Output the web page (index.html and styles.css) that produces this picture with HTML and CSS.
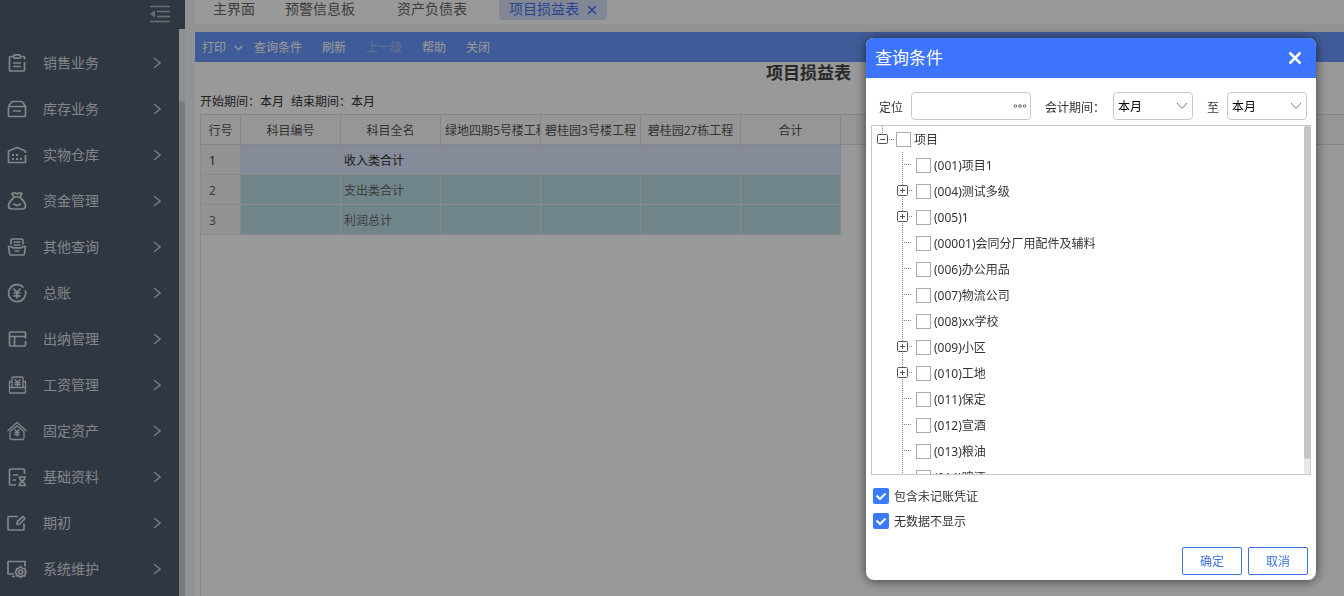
FILE: index.html
```html
<!DOCTYPE html>
<html lang="zh-CN">
<head>
<meta charset="utf-8">
<title>项目损益表</title>
<link rel="stylesheet" href="styles.css">
</head>
<body>
<svg class="sprite" aria-hidden="true">
  <symbol id="arrow" viewBox="0 0 8 14"><path d="M1 2l6 5-6 5"/></symbol>
  <symbol id="down" viewBox="0 0 12 8"><path d="M1 1l5 5.500 5-5.500"/></symbol>
  <symbol id="leaf" viewBox="0 0 19 26"><path class="dots" d="M5.500 0V26M7 12.500H15"/></symbol>
  <symbol id="plus" viewBox="0 0 19 26"><path class="dots" d="M5.500 0V7M5.500 19V26M12 12.500H15"/><rect x=".5" y="7.500" width="10" height="10" rx="1"/><path d="M3 12.500H8M5.500 10V15"/></symbol>
  <symbol id="minus" viewBox="0 0 19 26"><path class="dots" d="M5.500 0V7M12 13.500H17"/><rect x=".5" y="8.500" width="10" height="9" rx="1"/><path d="M3 13.500H8"/></symbol>
</svg>
<div class="app">
  <aside class="sidebar">
    <div class="side-top">
      <button class="collapse" aria-label="收起菜单"><svg viewBox="0 0 20 18"><path d="M0 1.500H20M7 6.500H20M7 11.500H20M0 16.500H20"/><path class="solid" d="M0 9l5-3.500v7z"/></svg></button>
    </div>
    <div class="side-body">
      <nav class="menu">
        <a href="#"><svg class="icon" viewBox="0 0 20 20"><path d="M6 3.500H3.500Q2.500 3.500 2.500 4.500V17Q2.500 18 3.500 18H16.500Q17.500 18 17.500 17V9M14 3.500H16.500Q17.500 3.500 17.500 4.500V6.500M6.500 3.500Q6.500 1.800 8 1.800H12Q13.500 1.800 13.500 3.500Q13.500 5.200 12 5.200H8Q6.500 5.200 6.500 3.500M6 10H14M6 13.500H14"/></svg><span>销售业务</span><svg class="arrow"><use href="#arrow"/></svg></a>
        <a href="#"><svg class="icon" viewBox="0 0 20 20"><path d="M1.500 7L4.500 3.200Q5 2.500 6 2.500H14Q15 2.500 15.500 3.200L18.500 7M1.500 7.500H18.500V16.500Q18.500 17.500 17.500 17.500H2.500Q1.500 17.500 1.500 16.500V7.500M6 12H14"/></svg><span>库存业务</span><svg class="arrow"><use href="#arrow"/></svg></a>
        <a href="#"><svg class="icon" viewBox="0 0 20 20"><path d="M18.500 8V6L10 2.500 1.500 6V17.500H18.500V10"/><path class="dotfill" d="M5 9h2v2H5zM9 9h2v2H9zM5 13h2v2H5zM9 13h2v2H9zM13 13h2v2h-2z"/></svg><span>实物仓库</span><svg class="arrow"><use href="#arrow"/></svg></a>
        <a href="#"><svg class="icon" viewBox="0 0 20 20"><path d="M7 6L5 2.500Q7.500 1 10 3Q12.500 1 15 2.500L13 6ZM7 6.500Q1.500 11 1.500 15Q1.500 18 5 18H15Q18.500 18 18.500 15Q18.500 11 13 6.500M6 12.500Q10 16.500 14 12.500"/></svg><span>资金管理</span><svg class="arrow"><use href="#arrow"/></svg></a>
        <a href="#"><svg class="icon" viewBox="0 0 20 20"><path d="M4 7.500V3.500Q4 2 5.500 2H14.500Q16 2 16 3.500V7.500M6.500 5H13.500M6.500 8H13.500M4 9.500H1.500L2.500 16.500Q2.700 18 4 18H16Q17.300 18 17.500 16.500L18.500 9.500H16Q15 10.800 13.500 10.800H6.500Q5 10.800 4 9.500M7.500 14H12.500"/></svg><span>其他查询</span><svg class="arrow"><use href="#arrow"/></svg></a>
        <a href="#"><svg class="icon" viewBox="0 0 20 20"><path d="M16.500 4.500A8.500 8.500 0 1 0 18.200 7.500M6.500 5.500L10 9.500 13.500 5.500M10 9.500V15.500M6.500 10H13.500M6.500 12.800H13.500"/></svg><span>总账</span><svg class="arrow"><use href="#arrow"/></svg></a>
        <a href="#"><svg class="icon" viewBox="0 0 20 20"><path d="M18.500 9.500V4Q18.500 3 17.500 3H3.500Q2.500 3 2.500 4V16Q2.500 17 3.500 17H17.500Q18.500 17 18.500 16V12M2.500 7.500H18.500M7.500 7.500V17"/></svg><span>出纳管理</span><svg class="arrow"><use href="#arrow"/></svg></a>
        <a href="#"><svg class="icon thin" viewBox="0 0 20 20"><path d="M5 12.500V3Q5 2 6 2H15Q16 2 16 3V12.500M5 6.500H2.500V17Q2.500 18 3.500 18H17.500Q18.500 18 18.500 17V6.500H16M2.500 12.500H18.500M7.500 4L10.500 7 13.500 4M10.500 7V11.500M7.500 7.500H13.500M7.500 9.500H13.500"/></svg><span>工资管理</span><svg class="arrow"><use href="#arrow"/></svg></a>
        <a href="#"><svg class="icon thin" viewBox="0 0 20 20"><path d="M.5 10L10 1.500 19.500 10M3 10.500L10 4.800 17 10.500V17Q17 18.500 15.500 18.500H4.500Q3 18.500 3 17V10.500M7.800 8.500L10 11 12.200 8.500M10 11V15.500M7.500 11.500H12.500M7.500 13.500H12.500"/></svg><span>固定资产</span><svg class="arrow"><use href="#arrow"/></svg></a>
        <a href="#"><svg class="icon" viewBox="0 0 20 20"><path d="M17.500 7V3Q17.500 2 16.500 2H3.500Q2.500 2 2.500 3V17Q2.500 18 3.500 18H9M6 8H11M6 13H9M11.500 10H19M11.500 18.500H19M12.500 10Q12.500 12.500 15.200 14.200Q18 12.500 18 10M12.500 18.500Q12.500 16 15.200 14.200Q18 16 18 18.500"/></svg><span>基础资料</span><svg class="arrow"><use href="#arrow"/></svg></a>
        <a href="#"><svg class="icon" viewBox="0 0 20 20"><path d="M11 3.500H2Q1 3.500 1 4.500V16Q1 17 2 17H16Q17 17 17 16V10.500M10 11.500L10.500 8.500 16 3.500 18 5.500 12.700 11Z"/></svg><span>期初</span><svg class="arrow"><use href="#arrow"/></svg></a>
        <a href="#"><svg class="icon" viewBox="0 0 20 20"><path d="M18 7.500V2.500H1V15H7M5 17.500H8M13.500 7.500L15.500 9.500 18 9.500 18.200 11.500 19.200 13 18 14.500V16.800H15.500L13.700 18.300 11.500 16.800H9.500V14.500L8.200 13 9.500 11.500V9.500H11.500Z"/><circle cx="13.700" cy="13" r="2"/></svg><span>系统维护</span><svg class="arrow"><use href="#arrow"/></svg></a>
      </nav>
      <div class="side-scroll"><div class="side-thumb"></div></div>
    </div>
  </aside>
  <main class="main">
    <nav class="tabs">
      <a class="tab home" href="#">主界面</a>
      <a class="tab" href="#">预警信息板</a>
      <a class="tab" href="#">资产负债表</a>
      <div class="tab active"><a href="#">项目损益表</a><button aria-label="关闭标签"><svg viewBox="0 0 10 10"><path d="M1 1l8 8M9 1l-8 8"/></svg></button></div>
    </nav>
    <section class="sheet">
      <div class="toolbar">
        <button class="print">打印<svg viewBox="0 0 12 8"><use href="#down"/></svg></button>
        <button>查询条件</button>
        <button>刷新</button>
        <button disabled>上一级</button>
        <button>帮助</button>
        <button>关闭</button>
      </div>
      <h1>项目损益表</h1>
      <p class="period"><span>开始期间：本月</span><span>结束期间：本月</span></p>
      <div class="grid">
        <table>
          <colgroup><col class="num"><col class="data"><col class="data"><col class="data"><col class="data"><col class="data"><col class="data"><col></colgroup>
          <thead><tr><th>行号</th><th>科目编号</th><th>科目全名</th><th>绿地四期5号楼工程</th><th>碧桂园3号楼工程</th><th>碧桂园27栋工程</th><th>合计</th><th></th></tr></thead>
          <tbody>
            <tr class="current"><td>1</td><td></td><td>收入类合计</td><td></td><td></td><td></td><td></td><td></td></tr>
            <tr><td>2</td><td></td><td>支出类合计</td><td></td><td></td><td></td><td></td><td></td></tr>
            <tr><td>3</td><td></td><td>利润总计</td><td></td><td></td><td></td><td></td><td></td></tr>
          </tbody>
        </table>
      </div>
    </section>
  </main>
</div>
<div class="backdrop"></div>
<div class="dialog" role="dialog" aria-labelledby="dlg-title">
  <header><h2 id="dlg-title">查询条件</h2><button aria-label="关闭"><svg viewBox="0 0 14 14"><path d="M1.500 1.500l11 11M12.500 1.500l-11 11"/></svg></button></header>
  <div class="filters">
    <label for="locate">定位</label>
    <div class="locate"><input id="locate" type="text"><button aria-label="选择"><svg viewBox="0 0 14 6"><circle cx="2.500" cy="3" r="1.300"/><circle cx="7" cy="3" r="1.300"/><circle cx="11.500" cy="3" r="1.300"/></svg></button></div>
    <label class="range" for="from">会计期间：</label>
    <div class="pick"><select id="from"><option>本月</option></select><svg viewBox="0 0 12 8"><use href="#down"/></svg></div>
    <label class="to" for="to">至</label>
    <div class="pick"><select id="to"><option>本月</option></select><svg viewBox="0 0 12 8"><use href="#down"/></svg></div>
  </div>
  <div class="tree">
    <ul>
      <li class="root"><svg><use href="#minus"/></svg><label><input type="checkbox">项目</label></li>
      <li><svg><use href="#leaf"/></svg><label><input type="checkbox">(001)项目1</label></li>
      <li><svg><use href="#plus"/></svg><label><input type="checkbox">(004)测试多级</label></li>
      <li><svg><use href="#plus"/></svg><label><input type="checkbox">(005)1</label></li>
      <li><svg><use href="#leaf"/></svg><label><input type="checkbox">(00001)会同分厂用配件及辅料</label></li>
      <li><svg><use href="#leaf"/></svg><label><input type="checkbox">(006)办公用品</label></li>
      <li><svg><use href="#leaf"/></svg><label><input type="checkbox">(007)物流公司</label></li>
      <li><svg><use href="#leaf"/></svg><label><input type="checkbox">(008)xx学校</label></li>
      <li><svg><use href="#plus"/></svg><label><input type="checkbox">(009)小区</label></li>
      <li><svg><use href="#plus"/></svg><label><input type="checkbox">(010)工地</label></li>
      <li><svg><use href="#leaf"/></svg><label><input type="checkbox">(011)保定</label></li>
      <li><svg><use href="#leaf"/></svg><label><input type="checkbox">(012)宣酒</label></li>
      <li><svg><use href="#leaf"/></svg><label><input type="checkbox">(013)粮油</label></li>
      <li><svg><use href="#leaf"/></svg><label><input type="checkbox">(014)啤酒</label></li>
    </ul>
    <div class="tree-scroll"><div class="tree-thumb"></div></div>
  </div>
  <div class="options">
    <label><span class="check"><input type="checkbox" checked><svg viewBox="0 0 16 16"><path d="M3.500 7.500l3.500 3.500 5.500-5.500"/></svg></span>包含未记账凭证</label>
    <label><span class="check"><input type="checkbox" checked><svg viewBox="0 0 16 16"><path d="M3.500 7.500l3.500 3.500 5.500-5.500"/></svg></span>无数据不显示</label>
  </div>
  <footer><button>确定</button><button>取消</button></footer>
</div>
</body>
</html>
```
FILE: styles.css
```css
* { box-sizing: border-box; }
html, body { height: 100%; }
body { margin: 0; overflow: hidden; background: #f3f5f8; color: #333; font: 12px/18px "Noto Sans", "Noto Sans CJK SC", sans-serif; }
button, input, select { font: inherit; color: inherit; margin: 0; padding: 0; border: 0; background: none; }
a { color: inherit; text-decoration: none; }
svg { display: block; flex: none; fill: none; stroke: currentColor; }
.sprite { position: absolute; width: 0; height: 0; }
h1, h2, p, ul { margin: 0; padding: 0; }

.app { display: flex; height: 100vh; }

.sidebar { flex: none; width: 185px; display: flex; flex-direction: column; overflow: hidden; background: #4f5c71; color: #dcdee2; }
.side-top { flex: none; height: 29px; display: flex; justify-content: flex-end; padding: 5px 15px 0 0; }
.collapse { height: 18px; color: #b4b6ba; }
.collapse svg { width: 20px; height: 18px; stroke-width: 1.5; }
.collapse .solid { fill: currentColor; stroke: none; }
.side-body { flex: 1; min-height: 0; display: flex; }
.menu { flex: 1; padding-top: 11px; overflow: hidden; font-size: 14px; line-height: 20px; }
.menu a { display: flex; align-items: center; height: 46px; padding: 0 18px 0 7px; }
.menu span { flex: 1; margin-left: 16px; }
.icon { width: 20px; height: 20px; stroke-width: 1.7; stroke-linejoin: round; }
.icon.thin { stroke-width: 1.3; }
.icon .dotfill { fill: currentColor; stroke: none; }
.arrow { width: 8px; height: 14px; color: #c4c8d0; stroke-width: 1.5; }
.side-scroll { width: 6px; padding-top: 72px; background: #efefef; }
.side-thumb { height: 100%; border-radius: 3px 3px 0 0; background: #cdcdcd; }

.main { flex: 1; min-width: 0; display: flex; flex-direction: column; padding-left: 10px; }
.tabs { flex: none; display: flex; gap: 4px; height: 24px; padding-left: 8px; background: #fff; color: #666; font-size: 14px; line-height: 18px; }
.tab { height: 20px; padding: 0 28px 0 10px; border-radius: 0 0 4px 4px; white-space: nowrap; }
.tab.home { padding-right: 16px; }
.tab.active { display: flex; align-items: center; gap: 8px; padding-right: 10px; background: #d9e2fb; color: #4272ee; }
.tab.active a { height: 20px; }
.tab.active svg { width: 10px; height: 10px; stroke-width: 1.5; }

.sheet { flex: 1; min-height: 0; margin-top: 8px; display: flex; flex-direction: column; background: #fff; }
.toolbar { flex: none; height: 30px; display: flex; align-items: center; gap: 20px; padding: 2px 0 0 7px; background: #6b99fd; color: #fff; }
.toolbar button:disabled { color: #a5bcf0; }
.toolbar .print { display: flex; align-items: center; gap: 8px; margin-right: -9px; }
.print svg { width: 9px; height: 6px; stroke-width: 1.5; }
h1 { padding-left: 78px; text-align: center; font-size: 17px; line-height: 22px; color: #444; }
.period { display: flex; gap: 7px; padding: 8px 0 0 5px; line-height: 20px; height: 30px; }
.grid { flex: 1; min-height: 0; margin-left: 5px; border-left: 1px solid #e4e4e6; border-top: 1px solid #dedee4; overflow: hidden; }
table { width: 100%; table-layout: fixed; border-collapse: separate; border-spacing: 0; }
.num { width: 40px; }
.data { width: 100px; }
th, td { height: 30px; padding: 2px 4px 0; overflow: hidden; white-space: nowrap; border-right: 1px solid #dedee8; border-bottom: 1px solid #dedee8; }
th { background: #fafafa; font-weight: 400; color: #555; }
td { padding: 2px 3px 0; background: #bbdee6; border-color: #ece4e4; color: #666; }
td:first-child { padding-left: 8px; background: #f3f5f8; }
.current td { background: #dee8ff; color: #333; }
.current td:first-child { background: #f3f5f8; }
th:last-child, td:last-child { border-right: 0; }
tbody td:last-child { background: #fff; border: 0; }

.backdrop { position: fixed; inset: 0; background: rgba(0, 0, 0, .4); }

.dialog { position: fixed; top: 38px; right: 28px; width: 450px; border-radius: 8px; background: #fff; box-shadow: 0 1px 12px rgba(0, 0, 0, .6); overflow: hidden; }
.dialog header { display: flex; align-items: center; justify-content: space-between; height: 40px; padding: 0 14px 0 9px; background: #3c74ff; color: #fff; }
.dialog h2 { font-size: 17px; line-height: 24px; font-weight: 400; }
.dialog header svg { width: 14px; height: 14px; stroke-width: 2.5; }
.filters { display: flex; align-items: center; height: 28px; margin: 14px 9px 5px 13px; }
.filters label { padding-top: 3px; }
.locate { display: flex; align-items: center; width: 120px; height: 28px; margin-left: 8px; border: 1px solid #c8c8c8; border-radius: 4px; }
.locate input { flex: 1; min-width: 0; height: 26px; padding-left: 5px; outline: 0; }
.locate button { margin-right: 3px; color: #666; }
.locate svg { width: 14px; height: 6px; stroke-width: 1; }
.range { margin: 0 8px 0 14px; }
.to { margin: 0 8px 0 14px; }
.pick { display: grid; align-items: center; width: 80px; height: 28px; border: 1px solid #c8c8c8; border-radius: 4px; color: #000; }
.pick select, .pick svg { grid-area: 1 / 1; }
.pick select { appearance: none; width: 100%; height: 26px; padding: 2px 0 0 4px; outline: 0; }
.pick svg { width: 12px; height: 8px; justify-self: end; margin-right: 4px; color: #777; pointer-events: none; }

.tree { display: flex; height: 350px; margin: 0 5px; border: 1px solid #c8c8c8; overflow: hidden; }
.tree ul { flex: 1; list-style: none; }
.tree li { display: flex; height: 26px; padding-left: 25px; }
.tree li.root { padding-left: 5px; }
.tree li svg { width: 19px; height: 26px; color: #555; }
.dots { stroke: #888; stroke-dasharray: 1 1; }
.tree label { display: flex; align-items: center; gap: 3px; padding-top: 2px; }
.tree input { appearance: none; width: 15px; height: 15px; margin-bottom: 1px; border: 1px solid #aaa; background: #fff; }
.tree-scroll { width: 6px; background: #e8e8e8; }
.tree-thumb { height: 333px; border-radius: 3px; background: #c4c4c4; }

.options { display: flex; flex-direction: column; gap: 5px; padding: 11px 7px 0; }
.options label { display: flex; align-items: center; gap: 5px; height: 20px; padding-top: 2px; }
.check { display: grid; width: 16px; height: 16px; margin-bottom: 2px; }
.check input, .check svg { grid-area: 1 / 1; width: 16px; height: 16px; }
.check input { appearance: none; border-radius: 2px; background: #3a7afe; }
.check svg { color: #fff; stroke-width: 2; pointer-events: none; }
.dialog footer { display: flex; justify-content: flex-end; gap: 6px; padding: 16px 8px 5px; }
.dialog footer button { width: 60px; height: 28px; padding-top: 2px; border: 1px solid #3c6fe4; border-radius: 2px; color: #3c6fe4; }
```
